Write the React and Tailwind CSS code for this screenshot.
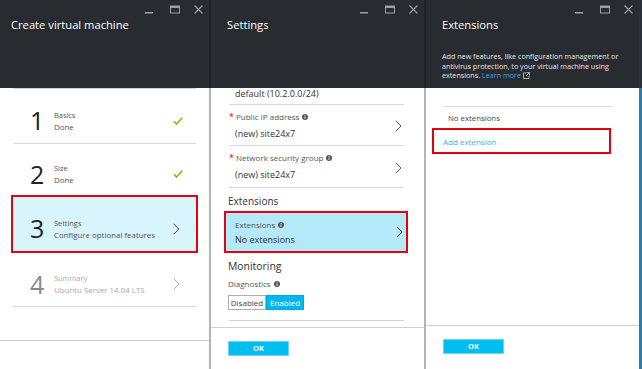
import React from "react";

const FONT = { fontFamily: '"Open Sans", "Noto Sans", sans-serif' };

function Controls() {
  return (
    <div className="flex justify-end items-start gap-[14px] pr-[6px] pt-[5px] h-[14px]">
      <svg width="9" height="9" viewBox="0 0 9 9" className="mr-[2px]">
        <rect x="0" y="7" width="8" height="1.5" fill="#9aa0a6" />
      </svg>
      <svg width="10" height="9" viewBox="0 0 10 9">
        <rect x="0.5" y="1" width="9" height="7" fill="none" stroke="#9aa0a6" strokeWidth="1" />
        <rect x="0.5" y="1" width="9" height="2" fill="#9aa0a6" />
      </svg>
      <svg width="9" height="9" viewBox="0 0 9 9">
        <path d="M0.5 0.5 L8.5 8.5 M8.5 0.5 L0.5 8.5" stroke="#9aa0a6" strokeWidth="1.1" />
      </svg>
    </div>
  );
}

function Chevron({ color = "#555" }) {
  return (
    <svg width="7" height="12" viewBox="0 0 7 12">
      <path d="M0.8 0.8 L6 6 L0.8 11.2" fill="none" stroke={color} strokeWidth="1" />
    </svg>
  );
}

function Check() {
  return (
    <svg width="10" height="8" viewBox="0 0 10 8">
      <path d="M0.8 4.2 L3.6 7 L9.2 0.8" fill="none" stroke="#7cba00" strokeWidth="1.5" />
    </svg>
  );
}

function Info() {
  return (
    <svg width="6" height="6" viewBox="0 0 6 6" className="inline-block ml-[3px] align-[0px]">
      <circle cx="3" cy="3" r="3" fill="#555" />
      <rect x="2.55" y="2.5" width="0.9" height="2.3" fill="#fff" />
      <rect x="2.55" y="1.1" width="0.9" height="0.9" fill="#fff" />
    </svg>
  );
}

function Step({ n, title, sub, done, muted }) {
  return (
    <div className="flex items-center h-full pt-[9px]">
      <div
        className={`w-[24px] pl-[17px] box-content text-[25px] font-normal leading-none ${muted ? "text-[#8a8a8a]" : "text-[#222]"}`}
      >
        {n}
      </div>
      <div className="flex-1 flex flex-col">
        <span className={`text-[7.4px] leading-[12px] ${muted ? "text-[#aaa]" : "text-[#555]"}`}>{title}</span>
        <span className={`text-[7.9px] leading-[12px] ${muted ? "text-[#aaa]" : "text-[#555]"}`}>{sub}</span>
      </div>
      <div className="w-[23px] flex justify-start">
        {done ? <Check /> : <Chevron color={muted ? "#aaa" : "#555"} />}
      </div>
    </div>
  );
}

function Panel1() {
  return (
    <div className="w-[209px] flex flex-col bg-white">
      <div className="h-[88px] bg-[#282c31]">
        <Controls />
        <div className="pl-[11px] mt-[3px] text-[11.2px] leading-[16px] text-white">Create virtual machine</div>
      </div>
      <div className="flex-1 flex flex-col">
        <div className="mx-[13px] h-px bg-[#d4d4d4]" />
        <div className="mx-[13px] h-[55px] border-b border-[#d8d8d8]">
          <Step n="1" title="Basics" sub="Done" done />
        </div>
        <div className="mx-[13px] h-[51px]">
          <Step n="2" title="Size" sub="Done" done />
        </div>
        <div className="mx-[11px] h-[58px] border-2 border-[#e3000f] bg-[#d8f4fd]">
          <Step n="3" title="Settings" sub="Configure optional features" />
        </div>
        <div className="mx-[13px] h-[54px] border-b border-[#d8d8d8]">
          <Step n="4" title="Summary" sub="Ubuntu Server 14.04 LTS" muted />
        </div>
        <div className="h-[33px]" />
        <div className="h-px bg-[#d0d0d0]" />
        <div className="flex-1" />
      </div>
    </div>
  );
}

function FieldRow({ label, value, star, height = "h-[41px]" }) {
  return (
    <div className={`${height} border-b border-[#d8d8d8] flex items-start`}>
      <div className="flex-1 flex flex-col pt-[6px]">
        <div className="flex items-center text-[8px] leading-[12px] text-[#555]">
          <span className="w-[7px] text-[#e3000f] text-[9px] leading-[12px]">{star ? "*" : ""}</span>
          <span>{label}</span>
          <Info />
        </div>
        <div className="pl-[6px] mt-[4px] text-[9px] leading-[13px] text-[#333]">{value}</div>
      </div>
      <div className="self-center pr-[2px] pt-[2px]">
        <Chevron />
      </div>
    </div>
  );
}

function Panel2() {
  return (
    <div className="w-[213px] flex flex-col bg-white">
      <div className="h-[88px] bg-[#282c31]">
        <Controls />
        <div className="pl-[16px] mt-[3px] text-[11.2px] leading-[16px] text-white">Settings</div>
      </div>
      <div className="flex-1 flex flex-col">
        <div className="ml-[18px] mr-[20px] flex flex-col">
          <div className="h-[17px] border-b border-[#d8d8d8]">
            <div className="pl-[6px] text-[9px] leading-[11px] text-[#333]">default (10.2.0.0/24)</div>
          </div>
          <FieldRow label="Public IP address" value="(new) site24x7" star />
          <FieldRow label="Network security group" value="(new) site24x7" star height="h-[42px]" />
          <div className="h-[23px] flex items-center -ml-[1px] pt-[3px] text-[10px] text-[#333]">Extensions</div>
        </div>
        <div className="ml-[13px] mr-[16px] h-[42px] border-2 border-[#e3000f] bg-[#b3e9f9] flex items-center">
          <div className="flex-1 flex flex-col pl-[9px] pt-[1px]">
            <div className="flex items-center text-[8px] leading-[12px] text-[#555]">
              Extensions
              <Info />
            </div>
            <div className="mt-[2px] text-[9px] leading-[13px] text-[#333]">No extensions</div>
          </div>
          <div className="pr-[3px]">
            <Chevron />
          </div>
        </div>
        <div className="ml-[17px] mr-[20px] flex flex-col">
          <div className="h-[14px] mt-[7px] flex items-center text-[10.4px] text-[#333]">Monitoring</div>
          <div className="mt-[4px] h-[12px] flex items-center text-[8px] text-[#555]">
            Diagnostics
            <Info />
          </div>
          <div className="mt-[5px] flex">
            <div className="w-[38px] h-[15px] border border-[#b0b0b0] flex items-center justify-center text-[8px] text-[#444]">
              Disabled
            </div>
            <div className="w-[38px] h-[15px] bg-[#00b7f0] border border-[#00a7e0] flex items-center justify-center text-[8px] text-white">
              Enabled
            </div>
          </div>
          <div className="mt-[10px] ml-[1px] h-px bg-[#d0d0d0]" />
        </div>
        <div className="mt-[6px] h-px bg-[#d0d0d0]" />
        <div className="flex-1 pl-[17px] pt-[13px]">
          <div className="w-[61px] h-[15px] bg-[#00bdf2] border border-[#6fd3f0] flex items-center justify-center text-[7.5px] font-bold text-white">
            OK
          </div>
        </div>
      </div>
    </div>
  );
}

function Panel3() {
  return (
    <div className="w-[213px] flex flex-col bg-white">
      <div className="h-[88px] bg-[#282c31]">
        <Controls />
        <div className="pl-[16px] mt-[3px] text-[11.2px] leading-[16px] text-white">Extensions</div>
        <div className="pl-[16px] mt-[19px] text-[7.2px] leading-[9.5px] text-[#e4e4e4] whitespace-nowrap">
          <div>Add new features, like configuration management or</div>
          <div>antivirus protection, to your virtual machine using</div>
          <div className="flex items-center">
            extensions.&nbsp;<span className="text-[#3aa3df]">Learn more</span>
            <svg width="7" height="7" viewBox="0 0 7 7" className="ml-[2px]">
              <path d="M3 1 H0.5 V6.5 H6 V4" fill="none" stroke="#cfd3d6" strokeWidth="0.8" />
              <path d="M3.5 0.5 H6.5 V3.5 M6.5 0.5 L3 4" fill="none" stroke="#cfd3d6" strokeWidth="0.8" />
            </svg>
          </div>
        </div>
      </div>
      <div className="flex-1 flex flex-col">
        <div className="mt-[18px] ml-[17px] mr-[26px] h-px bg-[#dcdcdc]" />
        <div className="ml-[17px] mr-[26px] h-[21px] flex items-center pl-[5px] pt-[3px] text-[7.8px] text-[#444]">No extensions</div>
        <div className="ml-[6px] mr-[28px] h-[26px] border-2 border-[#e3000f] flex items-center pl-[9px] pt-[1px] text-[8px] text-[#2eb5e8]">
          Add extension
        </div>
        <div className="flex-1" />
        <div className="h-px bg-[#d0d0d0]" />
        <div className="h-[43px] pl-[17px] pt-[13px]">
          <div className="w-[61px] h-[15px] bg-[#00bdf2] border border-[#6fd3f0] flex items-center justify-center text-[7.5px] font-bold text-white">
            OK
          </div>
        </div>
      </div>
    </div>
  );
}

function Sep() {
  return (
    <div className="w-[2px] flex flex-col">
      <div className="h-[88px] bg-[#1d2024]" />
      <div className="flex-1 bg-[#b1b5b9]" />
    </div>
  );
}

export default function App() {
  return (
    <div className="w-[642px] h-[369px] flex overflow-hidden bg-white" style={FONT}>
      <Panel1 />
      <Sep />
      <Panel2 />
      <Sep />
      <Panel3 />
      <div className="w-[3px] flex flex-col">
        <div className="h-[88px] bg-[#2a3038]" />
        <div className="flex-1 bg-[#2d7bab]" />
      </div>
    </div>
  );
}
